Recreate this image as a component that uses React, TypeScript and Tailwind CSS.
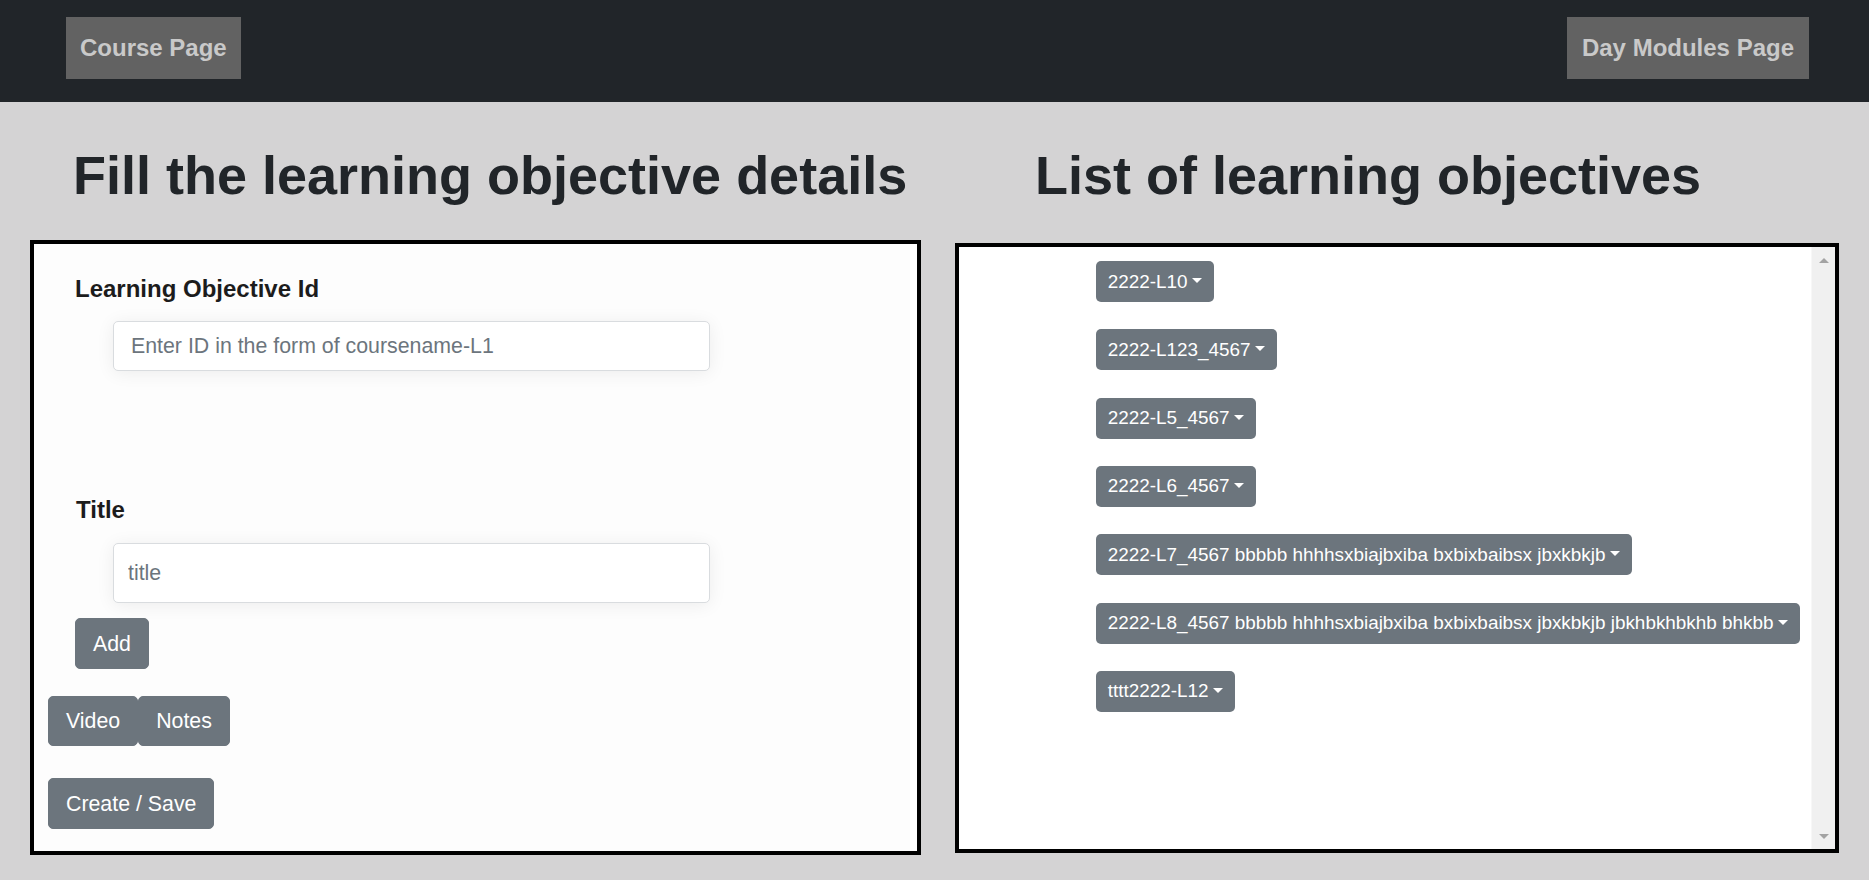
import React from "react";

const items = [
  "2222-L10",
  "2222-L123_4567",
  "2222-L5_4567",
  "2222-L6_4567",
  "2222-L7_4567 bbbbb hhhhsxbiajbxiba bxbixbaibsx jbxkbkjb",
  "2222-L8_4567 bbbbb hhhhsxbiajbxiba bxbixbaibsx jbxkbkjb jbkhbkhbkhb bhkbb",
  "tttt2222-L12",
];

function Btn({ children, className = "" }: { children: React.ReactNode; className?: string }) {
  return (
    <button
      className={
        "h-[50px] px-[17px] rounded-[5px] bg-[#6c757d] text-white text-[21.33px] leading-[32px] border border-[#6c757d] " +
        className
      }
    >
      {children}
    </button>
  );
}

export default function App() {
  return (
    <div className="min-h-[880px] bg-[#d4d3d4] font-['Liberation_Sans',Arial,sans-serif] text-[#212529]">
      <nav className="h-[102px] bg-[#212529] flex justify-between items-start pt-[17px] pl-[66px] pr-[60px]">
        <button className="h-[62px] px-[14px] bg-[#626262] text-[#c9c9c9] font-bold text-[24px] leading-[36px]">
          Course Page
        </button>
        <button className="h-[62px] px-[15px] bg-[#626262] text-[#c9c9c9] font-bold text-[24px] leading-[36px]">
          Day Modules Page
        </button>
      </nav>

      <div className="flex">
        {/* Left column */}
        <div className="w-[934px] shrink-0">
          <h1 className="pt-[41px] pl-[73px] text-[54px] leading-[64px] font-bold whitespace-nowrap">
            Fill the learning objective details
          </h1>
          <div className="mt-[33px] ml-[30px] w-[891px] h-[615px] border-4 border-black bg-[#fdfdfd] flex flex-col items-start">
            <label className="mt-[27px] ml-[41px] text-[24px] leading-[36px] font-bold text-[#1c1c1c]">
              Learning Objective Id
            </label>
            <input
              className="mt-[14px] ml-[79px] w-[597px] h-[50px] pl-[17px] bg-white border border-[#d9dcdf] rounded-[5px] text-[21.33px] placeholder:text-[#6c757d] shadow-[0_2px_18px_rgba(0,0,0,0.07)] outline-none"
              placeholder="Enter ID in the form of coursename-L1"
            />
            <label className="mt-[121px] ml-[42px] text-[24px] leading-[36px] font-bold text-[#1c1c1c]">
              Title
            </label>
            <input
              className="mt-[15px] ml-[79px] w-[597px] h-[60px] pl-[14px] bg-white border border-[#d9dcdf] rounded-[5px] text-[21.33px] placeholder:text-[#6c757d] shadow-[0_2px_18px_rgba(0,0,0,0.07)] outline-none"
              placeholder="title"
            />
            <Btn className="mt-[15px] ml-[41px] h-[51px]">Add</Btn>
            <div className="mt-[27px] ml-[14px] flex">
              <Btn>Video</Btn>
              <Btn>Notes</Btn>
            </div>
            <Btn className="mt-[32px] ml-[14px] h-[51px]">Create / Save</Btn>
          </div>
        </div>

        {/* Right column */}
        <div className="flex-1">
          <h1 className="pt-[41px] pl-[101px] text-[54px] leading-[64px] font-bold whitespace-nowrap">
            List of learning objectives
          </h1>
          <div className="mt-[36px] ml-[21px] w-[884px] h-[610px] border-4 border-black bg-white flex">
            <div className="flex-1 pt-[14px] pl-[137px] flex flex-col items-start gap-[27.33px]">
              {items.map((t) => (
                <button
                  key={t}
                  className="h-[41px] px-[11.67px] rounded-[5px] bg-[#6c757d] text-white text-[18.9px] leading-[28px] whitespace-nowrap flex items-center"
                >
                  <span>{t}</span>
                  <span className="ml-[4.8px] -mt-[2px] w-0 h-0 border-t-[5.6px] border-t-white border-x-[5.6px] border-x-transparent" />
                </button>
              ))}
            </div>
            <div className="w-[24px] bg-[#f0f0f0] border-l border-[#f7f7f7] flex flex-col items-center justify-between pt-[11px] pb-[10px]">
              <span className="w-0 h-0 border-b-[5px] border-b-[#a3a3a3] border-x-[5px] border-x-transparent" />
              <span className="w-0 h-0 border-t-[5px] border-t-[#a3a3a3] border-x-[5px] border-x-transparent" />
            </div>
          </div>
        </div>
      </div>
    </div>
  );
}
